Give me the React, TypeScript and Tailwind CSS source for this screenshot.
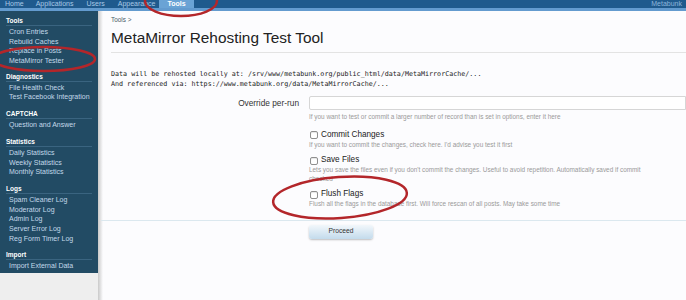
import React from 'react'

const sections: { title: string; items: string[] }[] = [
  { title: 'Tools', items: ['Cron Entries', 'Rebuild Caches', 'Replace in Posts', 'MetaMirror Tester'] },
  { title: 'Diagnostics', items: ['File Health Check', 'Test Facebook Integration'] },
  { title: 'CAPTCHA', items: ['Question and Answer'] },
  { title: 'Statistics', items: ['Daily Statistics', 'Weekly Statistics', 'Monthly Statistics'] },
  { title: 'Logs', items: ['Spam Cleaner Log', 'Moderator Log', 'Admin Log', 'Server Error Log', 'Reg Form Timer Log'] },
  { title: 'Import', items: ['Import External Data'] },
]

function Checkbox({ label, hint }: { label: string; hint: React.ReactNode }) {
  return (
    <div className="mb-[6px]">
      <div className="flex items-center h-[11px]">
        <span className="w-[8px] h-[8px] ml-[1px] mr-[3px] rounded-[2px] border border-[#8f8f8f] bg-white shadow-[inset_0_1px_1px_rgba(0,0,0,0.1)]" />
        <span className="text-[8.2px] text-[#222]">{label}</span>
      </div>
      <div className="text-[6.4px] text-[#9a9a9a] leading-[8.5px] whitespace-nowrap">{hint}</div>
    </div>
  )
}

export default function App() {
  return (
    <div className="relative w-[686px] h-[300px] overflow-hidden bg-[#fcfcfe] font-['Liberation_Sans',Arial,sans-serif]">
      {/* top nav */}
      <div className="h-[8px] bg-[#1f5a8d] flex overflow-hidden">
        <div className="flex items-end h-[8px] text-[7px] text-[#a9c9e6] leading-[8px]">
          <span className="ml-[5px]">Home</span>
          <span className="ml-[12px]">Applications</span>
          <span className="ml-[13px]">Users</span>
          <span className="ml-[13px]">Appearance</span>
          <span className="ml-[4px] px-[8px] bg-[#6aa3d5] text-white font-bold">Tools</span>
        </div>
        <span className="ml-auto mr-[4px] text-[7px] leading-[8px] text-[#8db6dc]">Metabunk</span>
      </div>
      <div className="h-[3px] bg-[#639bcf]" />

      <div className="flex h-[289px]">
        {/* sidebar */}
        <div className="w-[98px] flex flex-col bg-[#eeeeee]">
          <div className="bg-[#224b64] pt-[5px] pb-[2px]">
            {sections.map((s) => (
              <div key={s.title} className="mb-[7px] first:mb-[6px] last:mb-0">
                <div className="mx-[6px] h-[10px] leading-[10px] text-[6.5px] font-bold text-white border-b border-[#3a6480]">
                  {s.title}
                </div>
                <div className="pt-[1px]">
                  {s.items.map((it) => (
                    <div key={it} className="pl-[9px] h-[9.7px] leading-[9.7px] text-[7px] text-[#c3d9ea] whitespace-nowrap">
                      {it}
                    </div>
                  ))}
                </div>
              </div>
            ))}
          </div>
        </div>
        <div className="w-[5px] bg-gradient-to-r from-[#c9c9c9] to-[#fcfcfe]" />

        {/* content */}
        <div className="flex-1 pl-[8px] pt-[5px]">
          <div className="text-[6.4px] text-[#4a5a66] leading-[8px]">Tools &gt;</div>
          <h1 className="mt-[3px] text-[15.4px] leading-[22px] text-[#222] border-b border-[#e3e3e3] pb-[3px]">
            MetaMirror Rehosting Test Tool
          </h1>
          <div className="mt-[16px] font-['DejaVu_Sans_Mono',monospace] text-[6.7px] leading-[10px] text-[#222] whitespace-nowrap">
            <div>Data will be rehosted locally at: /srv/www/metabunk.org/public_html/data/MetaMirrorCache/...</div>
            <div>And referenced via: https://www.metabunk.org/data/MetaMirrorCache/...</div>
          </div>

          <div className="mt-[7px] flex">
            <div className="w-[198px] pr-[10px] text-right text-[8.3px] text-[#333] leading-[14px]">Override per-run</div>
            <div className="flex-1">
              <div className="h-[14px] border border-[#d6d6d6] rounded-l-[2px] bg-white" />
              <div className="mt-[3px] text-[6.4px] text-[#9a9a9a] leading-[8.5px] whitespace-nowrap">
                If you want to test or commit a larger number of record than is set in options, enter it here
              </div>
              <div className="mt-[8px]">
                <Checkbox
                  label="Commit Changes"
                  hint="If you want to commit the changes, check here. I'd advise you test it first"
                />
                <Checkbox
                  label="Save Files"
                  hint={
                    <>
                      <div>Lets you save the files even if you don't commit the changes. Useful to avoid repetition. Automatically saved if commit</div>
                      <div>checked</div>
                    </>
                  }
                />
                <Checkbox
                  label="Flush Flags"
                  hint="Flush all the flags in the database first. Will force rescan of all posts. May take some time"
                />
              </div>
            </div>
          </div>
          <div className="mt-[5px] -ml-[10px] border-t border-[#dbe8ef]" />
          <div className="mt-[4px] ml-[198px] w-[64px] h-[14px] rounded-[3px] bg-gradient-to-b from-[#f2f7fb] to-[#c3dbec] shadow-[0_1px_2px_rgba(0,0,0,0.25)] flex items-center justify-center text-[6.7px] text-[#333]">
            Proceed
          </div>
        </div>
      </div>

      {/* red annotations */}
      <svg className="absolute inset-0 pointer-events-none" width="686" height="300">
        <g fill="none" stroke="#b3262a" strokeWidth="2.5">
          <ellipse cx="181" cy="1" rx="36" ry="15" />
          <ellipse cx="44" cy="59" rx="51" ry="12" />
          <ellipse cx="340" cy="197.5" rx="67" ry="20.5" transform="rotate(-4 340 197.5)" />
        </g>
      </svg>
    </div>
  )
}
